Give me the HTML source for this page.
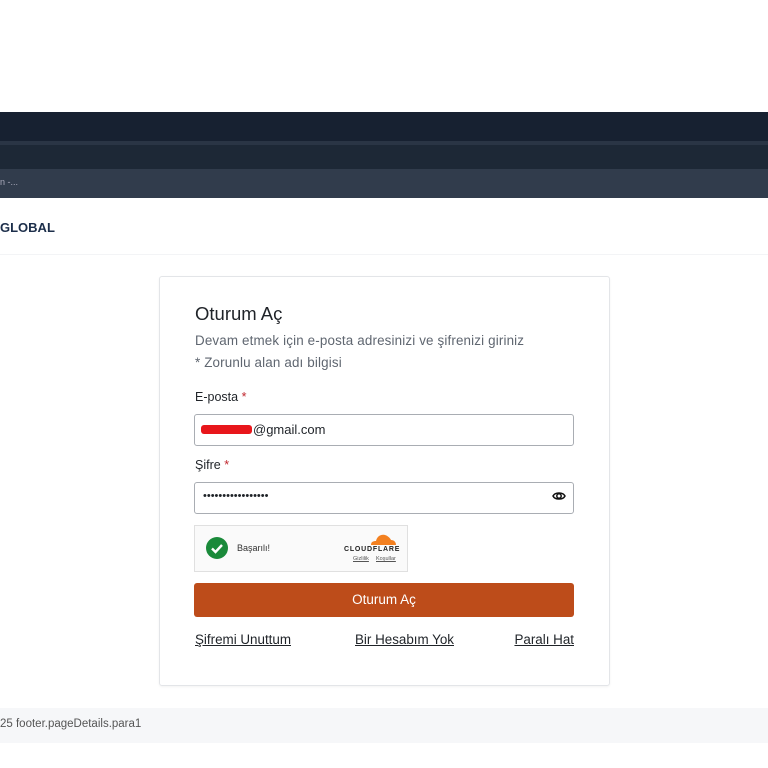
<!DOCTYPE html>
<html><head><meta charset="utf-8"><style>
body{margin:0;width:768px;height:768px;background:#fff;font-family:"Liberation Sans",sans-serif;position:relative;overflow:hidden;color:#1f2328}
.a{position:absolute}
</style></head><body>
<div class="a" style="top:112px;left:0;width:768px;height:29px;background:#172131"></div>
<div class="a" style="top:141px;left:0;width:768px;height:4px;background:#2a3545"></div>
<div class="a" style="top:145px;left:0;width:768px;height:24px;background:#1d2836"></div>
<div class="a" style="top:169px;left:0;width:768px;height:29px;background:#313c4c"></div>
<div class="a" style="top:177px;left:0;font-size:9px;color:#aab">n -...</div>
<div class="a" style="top:220px;left:0;font-size:13px;font-weight:bold;color:#1c2e4a">GLOBAL</div>
<div class="a" style="top:254px;left:0;width:768px;height:1px;background:#f3f4f6"></div>
<div class="a" style="top:276px;left:159px;width:449px;height:408px;border:1px solid #e3e5e8;border-radius:3px;box-shadow:0 1px 2px rgba(0,0,0,.05)"></div>
<div class="a" style="top:303px;left:195px;font-size:18.5px;color:#1f2328">Oturum Aç</div>
<div class="a" style="top:333px;left:195px;font-size:13.4px;color:#5f6670;letter-spacing:0.15px">Devam etmek için e-posta adresinizi ve şifrenizi giriniz</div>
<div class="a" style="top:355px;left:195px;font-size:13.4px;color:#5f6670;letter-spacing:0.15px">* Zorunlu alan adı bilgisi</div>
<div class="a" style="top:390px;left:195px;font-size:12.5px">E-posta <span style="color:#c0262d">*</span></div>
<div class="a" style="top:414px;left:194px;width:378px;height:30px;border:1px solid #a9adb3;border-radius:3px"></div>
<div class="a" style="top:425px;left:201px;width:51px;height:9px;background:#e8161b;border-radius:3px"></div>
<div class="a" style="top:422px;left:253px;font-size:13px">@gmail.com</div>
<div class="a" style="top:458px;left:195px;font-size:12.5px">Şifre <span style="color:#c0262d">*</span></div>
<div class="a" style="top:482px;left:194px;width:378px;height:30px;border:1px solid #a9adb3;border-radius:3px"></div>
<div class="a" style="top:490px;left:203px;font-size:11px;letter-spacing:0">•••••••••••••••••</div>
<svg class="a" style="top:489px;left:552px" width="14" height="14" viewBox="0 0 14 14"><path d="M1 7C3 3 11 3 13 7C11 11 3 11 1 7Z" fill="none" stroke="#111" stroke-width="1.5"/><circle cx="7" cy="7" r="2.2" fill="none" stroke="#111" stroke-width="1.5"/></svg>
<div class="a" style="top:525px;left:194px;width:212px;height:45px;border:1px solid #e0e0e0;background:#fafafa"></div>
<svg class="a" style="top:537px;left:206px" width="22" height="22" viewBox="0 0 22 22"><circle cx="11" cy="11" r="11" fill="#1a8a3a"/><path d="M6 11.5l3.5 3.5 6.5-7" fill="none" stroke="#fff" stroke-width="2.4"/></svg>
<div class="a" style="top:543px;left:237px;font-size:9px;color:#333">Başarılı!</div>
<svg class="a" style="top:532px;left:369px" width="28" height="14" viewBox="0 0 28 14"><path d="M2 13C2 10 4 9 7 9C8 4 12 2 16 3C19 4 21 6 22 8C25 8 27 10 27 13Z" fill="#f38020"/></svg>
<div class="a" style="top:546px;left:344px;font-size:7px;font-weight:bold;letter-spacing:0.8px;color:#222">CLOUDFLARE</div>
<div class="a" style="top:556px;left:353px;font-size:5.5px;color:#555;text-decoration:underline">Gizlilik</div>
<div class="a" style="top:556px;left:376px;font-size:5.5px;color:#555;text-decoration:underline">Koşullar</div>
<div class="a" style="top:583px;left:194px;width:380px;height:34px;background:#bd4c1a;border-radius:3px;color:#fff;font-size:13.5px;text-align:center;line-height:34px">Oturum Aç</div>
<div class="a" style="top:632px;left:195px;font-size:13.4px;text-decoration:underline">Şifremi Unuttum</div>
<div class="a" style="top:632px;left:355px;font-size:13.4px;text-decoration:underline">Bir Hesabım Yok</div>
<div class="a" style="top:632px;right:194px;font-size:13.4px;text-decoration:underline">Paralı Hat</div>
<div class="a" style="top:708px;left:0;width:768px;height:35px;background:#f6f7f9"></div>
<div class="a" style="top:718px;left:0;font-size:11.5px;color:#555">25 footer.pageDetails.para1</div>
</body></html>
